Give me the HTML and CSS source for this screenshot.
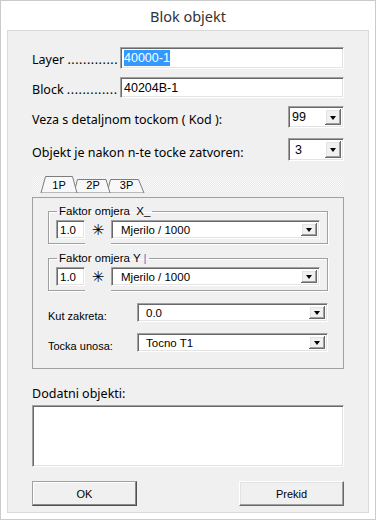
FILE: index.html
```html
<!DOCTYPE html>
<html lang="hr">
<head>
    <meta charset="UTF-8" />
    <title>Blok objekt</title>
    <link rel="stylesheet" href="styles.css">
</head>
<body>
    <div class="window">
        <div class="titlebar">Blok objekt</div>
        <div class="client">
            <div class="row row-layer">
                <label class="lbl">Layer <span class="dots">.............</span></label>
                <div class="edit wide"><span class="sel">40000-1</span></div>
            </div>
            <div class="row row-block">
                <label class="lbl">Block <span class="dots">.............</span></label>
                <div class="edit wide">40204B-1</div>
            </div>
            <div class="row row-kod">
                <span class="text">Veza s detaljnom tockom ( Kod ):</span>
                <div class="combo combo-small">
                    <span class="combo-val">99</span>
                    <span class="drop"><i class="arrow"></i></span>
                </div>
            </div>
            <div class="row row-closed">
                <span class="text">Objekt je nakon n-te tocke zatvoren:</span>
                <div class="combo combo-small">
                    <span class="combo-val indent">3</span>
                    <span class="drop"><i class="arrow"></i></span>
                </div>
            </div>

            <!-- tabs -->
            <div class="tabstrip">
                <div class="tab tab-1 active">
                    <svg class="tab-shape" width="38" height="17"><polygon points="1,17 5.5,0.5 32.5,0.5 37,17" /></svg>
                    <span>1P</span>
                </div>
                <div class="tab tab-2">
                    <svg class="tab-shape" width="38" height="17"><polygon points="1,17 4.5,3.5 33,3.5 37,17" /></svg>
                    <span>2P</span>
                </div>
                <div class="tab tab-3">
                    <svg class="tab-shape" width="39" height="17"><polygon points="1,17 4.5,3.5 32.5,3.5 38,17" /></svg>
                    <span>3P</span>
                </div>
            </div>
            <div class="panel">
                <fieldset class="group">
                    <legend>Faktor omjera &nbsp;X_</legend>
                    <div class="group-body">
                        <div class="edit factor">1.0</div>
                        <span class="star">✳</span>
                        <div class="combo combo-scale">
                            <span class="combo-val">Mjerilo / 1000</span>
                            <span class="drop"><i class="arrow"></i></span>
                        </div>
                    </div>
                </fieldset>
                <fieldset class="group group-y">
                    <legend>Faktor omjera Y <span class="caret">|</span></legend>
                    <div class="group-body">
                        <div class="edit factor">1.0</div>
                        <span class="star">✳</span>
                        <div class="combo combo-scale">
                            <span class="combo-val">Mjerilo / 1000</span>
                            <span class="drop"><i class="arrow"></i></span>
                        </div>
                    </div>
                </fieldset>
                <div class="prow prow-kut">
                    <span class="small-text">Kut zakreta:</span>
                    <div class="combo combo-wide">
                        <span class="combo-val">0.0</span>
                        <span class="drop"><i class="arrow"></i></span>
                    </div>
                </div>
                <div class="prow prow-tocka">
                    <span class="small-text">Tocka unosa:</span>
                    <div class="combo combo-wide">
                        <span class="combo-val">Tocno T1</span>
                        <span class="drop"><i class="arrow"></i></span>
                    </div>
                </div>
            </div>

            <div class="extra-label">Dodatni objekti:</div>
            <div class="memo"></div>

            <div class="buttons">
                <button class="btn btn-default">OK</button>
                <button class="btn">Prekid</button>
            </div>
        </div>
    </div>
</body>
</html>
```

FILE: styles.css
```css
* {
    box-sizing: border-box;
}
body {
    margin: 0;
    background: #fff;
    font-family: 'Noto Sans', 'Liberation Sans', sans-serif;
    color: #000;
}
.window {
    width: 376px;
    height: 520px;
    border: 1px solid #cbcbcb;
    background: #fff;
}
.titlebar {
    height: 29px;
    line-height: 30px;
    text-align: center;
    font-size: 14.5px;
    color: #333;
}
.client {
    height: 483px;
    margin: 0 6px;
    padding: 16px 24px 0 24px;
    background: #f0f0f0;
    border: 1px solid #dadada;
}

/* top rows */
.row {
    display: flex;
    align-items: center;
    height: 22px;
    font-size: 12.5px;
}
.row-block {
    margin-top: 8px;
    height: 21px;
}
.row-kod {
    margin-top: 8px;
}
.row-closed {
    margin-top: 10px;
    height: 23px;
}
.row .text {
    flex: 1;
    padding-top: 4px;
}
.row-closed .text {
    padding-top: 6px;
}
.lbl {
    width: 88px;
    text-align: right;
    padding-right: 4px;
    padding-top: 3px;
    white-space: nowrap;
}
.dots {
    letter-spacing: 0.55px;
}

/* sunken fields */
.edit,
.combo,
.memo {
    background: #fff;
    border: 1px solid;
    border-color: #a0a0a0 #fff #fff #a0a0a0;
    box-shadow: inset 1px 1px 0 #696969, inset -1px -1px 0 #e3e3e3;
}
.edit {
    height: 100%;
    display: flex;
    align-items: center;
    padding: 0 3px;
}
.edit.wide {
    flex: 1;
    font-family: 'Liberation Sans', sans-serif;
    font-size: 12.5px;
}
.sel {
    background: #3399ff;
    color: #fff;
    padding: 1px 0;
}
.combo {
    display: flex;
    align-items: stretch;
    height: 100%;
    font-family: 'Liberation Sans', sans-serif;
}
.combo-val {
    flex: 1;
    display: flex;
    align-items: center;
    padding-left: 3px;
}
.combo-val.indent {
    padding-left: 6px;
}
.combo-small {
    width: 56px;
    font-size: 12.5px;
}
.drop {
    width: 16px;
    margin: 2px 2px 2px 0;
    background: #f0f0f0;
    display: flex;
    align-items: center;
    justify-content: center;
    box-shadow: inset -1px -1px 0 #696969, inset 1px 1px 0 #fff, inset -2px -2px 0 #a0a0a0, inset 2px 2px 0 #e3e3e3;
}
.arrow {
    width: 0;
    height: 0;
    border-top: 4px solid #000;
    border-left: 3.5px solid transparent;
    border-right: 3.5px solid transparent;
    margin-top: 1px;
}

/* tabs */
.tabstrip {
    margin-top: 15px;
    height: 16px;
    padding-left: 8px;
    display: flex;
    background-color: #f7f7f7;
    background-image: repeating-conic-gradient(#e9e9e9 0 25%, #fbfbfb 0 50%);
    background-size: 2px 2px;
}
.tab {
    position: relative;
    height: 17px;
    width: 38px;
    display: flex;
    align-items: flex-end;
    justify-content: center;
    font-family: 'Liberation Sans', sans-serif;
    font-size: 11px;
    padding-bottom: 2px;
}
.tab span {
    position: relative;
}
.tab-shape {
    position: absolute;
    left: 0;
    top: 0;
}
.tab-shape polygon {
    fill: #f8f8f8;
    stroke: #7d7d7d;
    stroke-width: 1;
}
.tab-1 {
    z-index: 3;
}
.tab-2 {
    margin-left: -5px;
    z-index: 2;
}
.tab-3 {
    margin-left: -5px;
    width: 39px;
    z-index: 1;
}
.tab-2 span,
.tab-3 span {
    left: 1px;
}

.panel {
    margin-top: 5px;
    height: 172px;
    border: 1px solid #a0a0a0;
    padding: 7px 15px 0 15px;
    font-family: 'Liberation Sans', sans-serif;
    font-size: 11px;
}
.group {
    margin: 0;
    padding: 3px 7px 4px 7px;
    border: 1px solid #a0a0a0;
    box-shadow: inset 1px 1px 0 #fff, 1px 1px 0 #fff;
    min-width: 0;
}
.group legend {
    padding: 0 2px;
    margin-left: 1px;
    line-height: 12px;
    font-size: 11.5px;
}
.group-y {
    margin-top: 8px;
}
.caret {
    color: #3b7fc4;
}
.group-body {
    display: flex;
    height: 19px;
    align-items: stretch;
}
.edit.factor {
    width: 29px;
    font-size: 11.5px;
    padding-left: 3px;
}
.star {
    width: 26px;
    display: flex;
    align-items: center;
    justify-content: center;
    font-family: 'DejaVu Sans', sans-serif;
    font-size: 15px;
    font-weight: bold;
    background: #f0f0f0;
    margin-bottom: -6px;
    padding-bottom: 6px;
    position: relative;
}
.combo-scale {
    flex: 1;
    font-size: 11.5px;
}
.combo-scale .combo-val {
    padding-left: 9px;
}
.prow {
    display: flex;
    align-items: center;
    justify-content: space-between;
    height: 19px;
}
.prow-kut {
    margin-top: 12px;
}
.prow-tocka {
    margin-top: 11px;
}
.small-text {
    padding-top: 6px;
}
.combo-wide {
    width: 191px;
    font-size: 11.5px;
}
.combo-wide .combo-val {
    padding-left: 8px;
}

.extra-label {
    margin-top: 18px;
    height: 14px;
    line-height: 14px;
    font-size: 12.5px;
}
.memo {
    margin-top: 4px;
    height: 62px;
}
.buttons {
    margin-top: 14px;
    display: flex;
    justify-content: space-between;
}
.btn {
    width: 105px;
    height: 25px;
    padding: 0;
    background: #f0f0f0;
    font-family: 'Liberation Sans', sans-serif;
    font-size: 11px;
    color: #000;
    border: 1px solid;
    border-color: #fff #696969 #696969 #fff;
    box-shadow: inset -1px -1px 0 #a0a0a0, inset 1px 1px 0 #e3e3e3;
}
.btn-default {
    border-color: #a0a0a0 #505050 #505050 #a0a0a0;
    box-shadow: inset -1px -1px 0 #8a8a8a, inset 1px 1px 0 #fff;
}
```
